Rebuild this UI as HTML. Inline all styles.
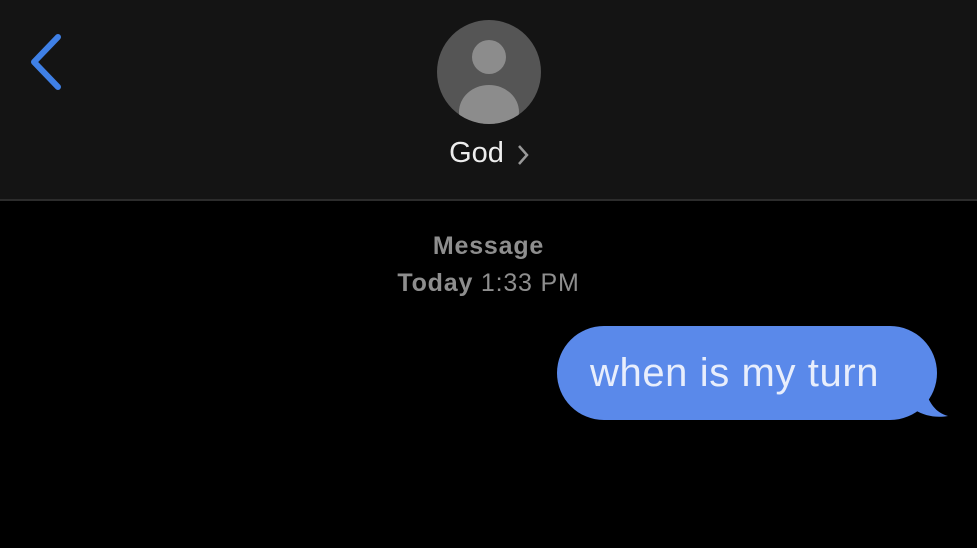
<!DOCTYPE html>
<html><head><style>
body{margin:0;width:977px;height:548px;background:#000;overflow:hidden;font-family:"Liberation Sans",sans-serif;position:relative}
.hdr{position:absolute;left:0;top:0;width:977px;height:199px;background:#141414;border-bottom:2px solid #2c2c2c}
.t{position:absolute;width:977px;text-align:center;color:#8e8e8e}
.bub{position:absolute;left:557px;top:326px;width:380px;height:94px;border-radius:47px;background:#5a89ea;color:#e8eefc;font-size:40px;letter-spacing:0.6px;line-height:94px;text-indent:33px;white-space:nowrap}
</style></head><body>
<div class="hdr"></div>
<svg style="position:absolute;left:0;top:0" width="977" height="200">
<polyline points="58,37 34,62 58,87" fill="none" stroke="#3f80e6" stroke-width="6" stroke-linecap="round" stroke-linejoin="round"/>
<defs><clipPath id="c"><circle cx="489" cy="72" r="52"/></clipPath></defs>
<circle cx="489" cy="72" r="52" fill="#555"/>
<g clip-path="url(#c)" fill="#8c8c8c"><circle cx="489" cy="57" r="17"/><ellipse cx="489" cy="112" rx="30" ry="27"/></g>
<polyline points="519,146 527,155 519,164" fill="none" stroke="#999" stroke-width="2.5"/>
</svg>
<div class="t" style="top:137px;left:-12px;font-size:29px;color:#eee">God</div>
<div class="t" style="top:232px;font-size:25px;letter-spacing:0.8px;font-weight:bold">Message</div>
<div class="t" style="top:269px;font-size:25px;letter-spacing:0.8px"><b>Today</b> 1:33 PM</div>
<svg style="position:absolute;left:900px;top:370px" width="60" height="60"><path d="M20 10 C30 35 35 42 48 46 C36 48 25 46 15 40 Z" fill="#5a89ea"/></svg>
<div class="bub">when is my turn</div>
</body></html>
